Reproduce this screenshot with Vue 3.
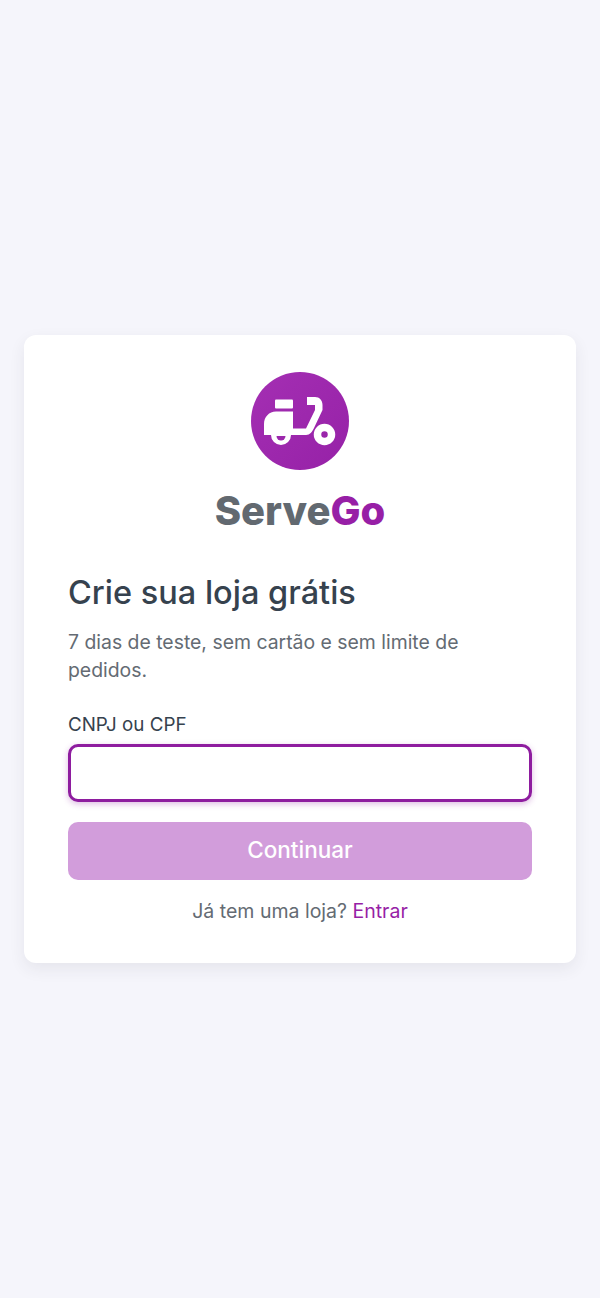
<template>
  <div class="page">
    <main class="card">
      <div class="brand">
        <svg class="logo" viewBox="0 0 98 98" width="98" height="98" aria-hidden="true">
          <defs>
            <linearGradient id="logoFill" x1="0" y1="0" x2="1" y2="1">
              <stop offset="0" stop-color="#a42fb3" />
              <stop offset="1" stop-color="#9621a7" />
            </linearGradient>
          </defs>
          <circle cx="49" cy="49" r="49" fill="url(#logoFill)" />
          <rect x="24" y="27.500" width="18" height="9" rx="1" fill="#fff" />
          <path fill="#fff" d="M56 25H64C68.500 25 71.500 28.500 71.500 33V38L63 56C61 60 59 63 55 63H40A10 10 0 0 1 20 63H13V52C13 45 18 39.500 25 39.500H42V56.500H55L64 38V33H56Z" />
          <path fill="#9c28ac" d="M25.500 64H34.500A4.500 4.500 0 0 1 25.500 64Z" />
          <circle cx="73.500" cy="62.500" r="7" fill="none" stroke="#fff" stroke-width="7.500" />
        </svg>
        <div class="wordmark">Serve<span>Go</span></div>
      </div>

      <h1>Crie sua loja grátis</h1>
      <p class="lead">7 dias de teste, sem cartão e sem limite de pedidos.</p>

      <label class="label" for="doc">CNPJ ou CPF</label>
      <input id="doc" v-model="doc" class="field" type="text" />

      <button class="submit" type="button" disabled>Continuar</button>

      <p class="foot">Já tem uma loja? <a href="#">Entrar</a></p>
    </main>
  </div>
</template>

<script setup>
import { ref } from 'vue'

const doc = ref('')
</script>

<style>
html, body { margin: 0; background: #f5f5fb; }
</style>

<style scoped>
.page { min-height: 1298px; box-sizing: border-box; display: flex; align-items: center; justify-content: center; padding: 0 24px; background: #f5f5fb; font-family: "Inter", "Noto Sans", sans-serif; }
.card { width: 100%; box-sizing: border-box; background: #fff; border-radius: 12px; padding: 37px 44px 38px; box-shadow: 0 6px 16px rgba(50, 50, 70, .08); }
.brand { display: flex; flex-direction: column; align-items: center; }
.logo { display: block; }
.wordmark { margin-top: 15px; font: 800 40px/52px "Inter", sans-serif; color: #626970; }
.wordmark span { color: #971fa6; }
h1 { margin: 35px 0 0; font-size: 32.500px; line-height: 42px; font-weight: 500; color: #36424e; }
.lead { margin: 14px 0 0; font-size: 19.400px; line-height: 28px; color: #646b73; }
.label { display: block; margin-top: 27px; font-size: 18.800px; line-height: 28px; color: #36424e; }
.field { display: block; width: 100%; box-sizing: border-box; height: 58px; margin-top: 5px; border: 3px solid #8e1c9f; border-radius: 10px; outline: none; background: #fff; box-shadow: 0 2px 6px rgba(142, 28, 159, .3); font: inherit; }
.submit { display: block; width: 100%; height: 58px; margin-top: 20px; padding: 0 0 3px; border: none; border-radius: 10px; background: #d29ddb; color: #fff; font: 500 22.500px "Inter", sans-serif; }
.foot { margin: 17px 0 0; text-align: center; font-size: 19.500px; line-height: 28px; color: #646b73; }
.foot a { color: #971fa6; text-decoration: none; }
</style>
